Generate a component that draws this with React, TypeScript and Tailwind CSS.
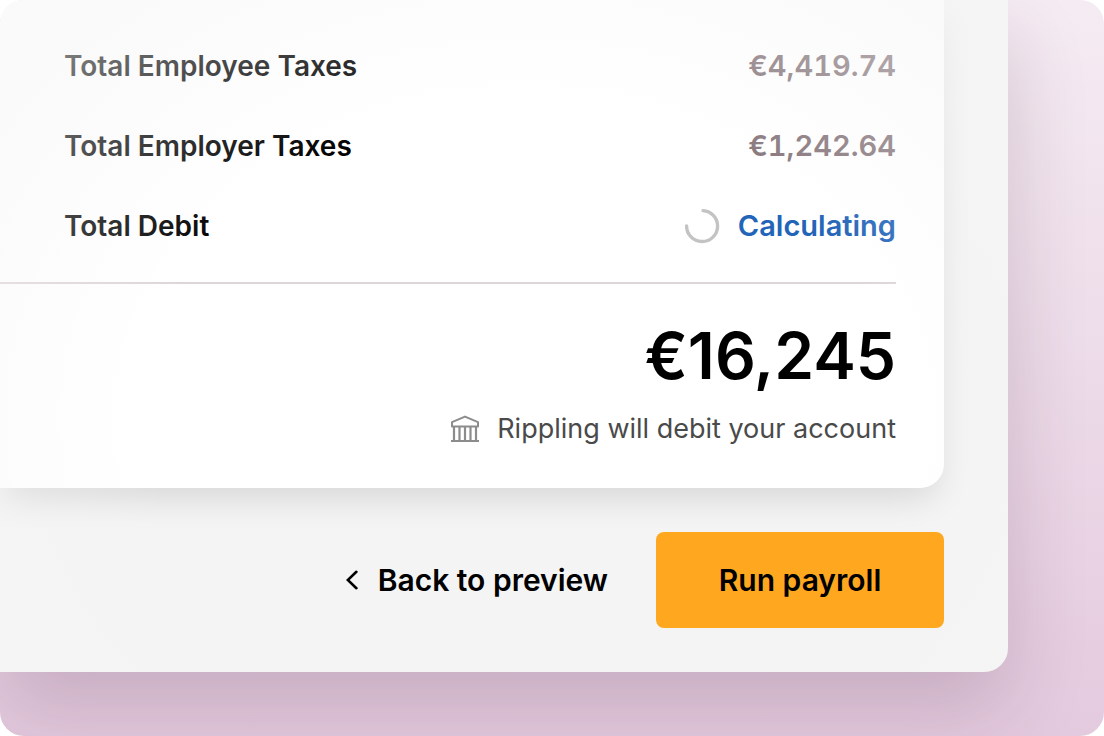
const totals = [
  { label: "Total Employee Taxes", value: "€4,419.74" },
  { label: "Total Employer Taxes", value: "€1,242.64" },
];

const Spinner = () => (
  <svg className="size-9" viewBox="0 0 36 36" fill="none" aria-hidden="true">
    <path
      d="M19 2.6A15.5 15.5 0 1 1 2.6 18"
      stroke="#c3c3c3"
      strokeWidth="3.4"
      strokeLinecap="round"
    />
  </svg>
);

const BankIcon = () => (
  <svg
    className="size-7"
    viewBox="0 0 28 28"
    fill="none"
    stroke="#8c8c8c"
    strokeWidth="2"
    aria-hidden="true"
  >
    <path d="M1 11.4V7.2L14 1.6L27 7.2V11.4Z" strokeLinejoin="round" />
    <path d="M3 11V26M8.5 11V26M14 11V26M19.5 11V26M25 11V26" strokeWidth="2.2" />
    <path d="M0 26H28" />
  </svg>
);

const ChevronIcon = () => (
  <svg className="h-5 w-3" viewBox="0 0 12 20" fill="none" aria-hidden="true">
    <path
      d="M10.4 1.8L1.8 10L10.4 18.2"
      stroke="currentColor"
      strokeWidth="2.6"
      strokeLinecap="round"
    />
  </svg>
);

const SummaryCard = () => (
  <section className="mr-16 rounded-br-3xl bg-white pt-[26px] pr-12 pb-[39px] shadow-[0_16px_32px_-4px_rgba(0,0,0,0.11)]">
    <dl className="pl-16 text-[28px] leading-10 font-semibold">
      {totals.map((item) => (
        <div key={item.label} className="flex h-20 items-center justify-between">
          <dt>{item.label}</dt>
          <dd className="text-[29px] text-[#85757a] tabular-nums">{item.value}</dd>
        </div>
      ))}
      <div className="flex h-20 items-center justify-between">
        <dt>Total Debit</dt>
        <dd className="flex items-center gap-[18px] text-[29px] text-[#2264b8]">
          <Spinner />
          Calculating
        </dd>
      </div>
    </dl>

    <hr className="mt-4 border-t-2 border-[#ded5d6]" />

    <p className="mt-10 text-right text-[64px] leading-16 font-semibold">€16,245</p>
    <p className="mt-[21px] flex items-center justify-end gap-[18px] text-[27px] leading-10 text-[#4a4a4a]">
      <BankIcon />
      Rippling will debit your account
    </p>
  </section>
);

const App = () => {
  return (
    <main className="flex min-h-screen flex-col overflow-hidden rounded-3xl bg-linear-to-b from-[#f5ecf3] to-[#e4cade] pr-24 pb-16 font-[Inter,sans-serif] text-black">
      <div className="relative flex-1 rounded-br-3xl bg-[#f4f4f4] pb-11 shadow-[0_36px_80px_0_rgba(60,30,50,0.18)]">
        <SummaryCard />

        <div className="mt-11 mr-16 flex items-center justify-end gap-12">
          <button className="flex items-center gap-5 text-[30px] leading-10 font-semibold">
            <ChevronIcon />
            Back to preview
          </button>
          <button className="relative z-10 h-24 w-72 rounded-lg bg-[#ffa81f] text-[30px] leading-10 font-semibold">
            Run payroll
          </button>
        </div>

        {/* Soft fade toward the corners */}
        <div className="pointer-events-none absolute inset-0 rounded-br-3xl bg-[radial-gradient(640px_520px_at_52%_62%,rgba(245,245,245,0)_58%,rgba(245,245,245,0.5)_100%)]" />
      </div>
    </main>
  );
};

export default App;
